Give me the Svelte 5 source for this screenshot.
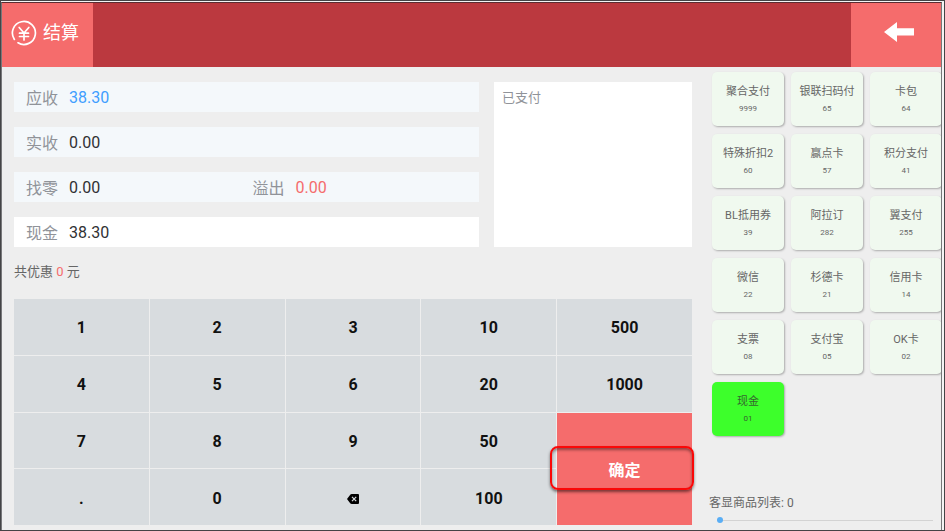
<script lang="ts">
  type Row = { id: string; label: string; value: string; tone?: string };

  const rows: Row[] = [
    { id: "due", label: "应收", value: "38.30", tone: "blue" },
    { id: "received", label: "实收", value: "0.00" },
    { id: "change", label: "找零", value: "0.00" },
  ];

  const keys = [
    "1", "2", "3", "10", "500",
    "4", "5", "6", "20", "1000",
    "7", "8", "9", "50", "ok",
    ".", "0", "del", "100",
  ];

  const methods = [
    { name: "聚合支付", code: "9999" },
    { name: "银联扫码付", code: "65" },
    { name: "卡包", code: "64" },
    { name: "特殊折扣2", code: "60" },
    { name: "赢点卡", code: "57" },
    { name: "积分支付", code: "41" },
    { name: "BL抵用券", code: "39" },
    { name: "阿拉订", code: "282" },
    { name: "翼支付", code: "255" },
    { name: "微信", code: "22" },
    { name: "杉德卡", code: "21" },
    { name: "信用卡", code: "14" },
    { name: "支票", code: "08" },
    { name: "支付宝", code: "05" },
    { name: "OK卡", code: "02" },
    { name: "现金", code: "01" },
  ];

  let selected = $state("01");
  let amount = $state("38.30");
  let listCount = $state(0);

  function press(key: string) {
    if (key === "ok") return;
    amount = key === "del" ? amount.slice(0, -1) : amount + key;
  }
</script>

<div class="frame">
  <div class="window">
    <header>
      <h1>
        <svg class="yen" viewBox="0 0 26 26" aria-hidden="true">
          <path d="M3.4 19.4A11.5 11.5 0 1 1 7 22.8" />
          <path d="M8.2 7.5 13 13l4.8-5.5M13 13v7M8.5 13.2h9M8.5 16.5h9" />
        </svg>
        结算
      </h1>
      <button class="back" aria-label="返回">
        <svg viewBox="0 0 30 20" aria-hidden="true">
          <path d="M0 10 13 0v6.3h17v7.2H13V20z" />
        </svg>
      </button>
    </header>

    <main>
      <section class="checkout">
        <div class="summary">
          <div class="rows">
            {#each rows as row (row.id)}
              <div class="row">
                <span class="label">{row.label}</span>
                <span class="value {row.tone ?? ''}">{row.value}</span>
                {#if row.id === "change"}
                  <span class="label">溢出</span>
                  <span class="value red">0.00</span>
                {/if}
              </div>
            {/each}
            <div class="row entry">
              <label class="label" for="cash">现金</label>
              <input id="cash" class="value" type="text" bind:value={amount} />
            </div>
          </div>
          <div class="paid">已支付</div>
        </div>

        <p class="discount">共优惠 <span class="red">0</span> 元</p>

        <div class="keypad">
          {#each keys as key (key)}
            <button
              class:ok={key === "ok"}
              aria-label={key === "del" ? "退格" : undefined}
              onclick={() => press(key)}
            >
              {#if key === "ok"}
                确定
                <span class="marker"></span>
              {:else if key === "del"}
                <svg class="del" viewBox="0 0 12 10" aria-hidden="true">
                  <path d="M0 5 3.2.8Q3.8 0 4.8 0H11q1 0 1 1v8q0 1-1 1H4.8q-1 0-1.6-.8z" />
                  <path class="cross" d="m5 2.8 4.2 4.4M9.2 2.8 5 7.2" />
                </svg>
              {:else}
                {key}
              {/if}
            </button>
          {/each}
        </div>
      </section>

      <aside>
        <div class="methods">
          {#each methods as method (method.code)}
            <button
              class:selected={selected === method.code}
              onclick={() => (selected = method.code)}
            >
              <span>{method.name}</span>
              <small>{method.code}</small>
            </button>
          {/each}
        </div>
        <div class="goods">
          <label for="goods">客显商品列表: {listCount}</label>
          <input id="goods" type="range" min="0" max="10" bind:value={listCount} />
        </div>
      </aside>
    </main>
  </div>
</div>

<style>
  :global(body) {
    margin: 0;
    background: #fff;
  }

  .frame {
    box-sizing: border-box;
    height: 100vh;
    padding: 1px 2px 0 0;
    border: 1px solid #444446;
    background: #f4f4f4;
  }
  .window {
    display: flex;
    flex-direction: column;
    box-sizing: border-box;
    height: 100%;
    border: solid #77777a;
    border-width: 0 1px;
    border-top: 1px solid #5a2c30;
    background: #eee;
    color: #666;
    font-family: Roboto, "Noto Sans CJK SC", sans-serif;
    overflow: hidden;
  }

  button {
    margin: 0;
    padding: 0;
    border: none;
    font-family: inherit;
    cursor: pointer;
  }

  header {
    display: flex;
    justify-content: space-between;
    flex: none;
    height: 64px;
    background: #bb393f;
  }
  h1 {
    display: flex;
    align-items: center;
    gap: 6px;
    box-sizing: border-box;
    width: 91px;
    margin: 0;
    padding: 0 0 4px 9px;
    background: #f56c6c;
    color: #fff;
    font-size: 18px;
    font-weight: 400;
    line-height: 24px;
    white-space: nowrap;
  }
  .yen {
    flex: none;
    width: 26px;
    height: 26px;
    fill: none;
    stroke: #fff;
    stroke-width: 1.7;
    stroke-linecap: round;
  }
  .back {
    display: flex;
    align-items: center;
    justify-content: center;
    width: 90px;
    padding: 0 0 7px 5px;
    background: #f56c6c;
  }
  .back svg {
    width: 30px;
    height: 20px;
    fill: #fff;
  }

  main {
    display: flex;
    flex: 1;
    min-height: 0;
  }
  .checkout {
    display: flex;
    flex-direction: column;
    flex: 1;
    padding: 15px 17px 5px 12px;
  }
  .summary {
    display: flex;
    gap: 15px;
  }
  .rows {
    display: flex;
    flex-direction: column;
    gap: 15px;
    flex: 1;
  }
  .row {
    display: flex;
    align-items: center;
    height: 30px;
    padding-left: 12px;
    background: #f4f8fb;
    font-size: 16px;
  }
  .entry {
    background: #fff;
  }
  .label {
    width: 43px;
    color: #909399;
  }
  .value {
    flex: 1;
    color: #303133;
  }
  .entry input {
    min-width: 0;
    padding: 0;
    border: none;
    outline: none;
    background: none;
    font: inherit;
  }
  .value.blue {
    color: #409eff;
  }
  .red,
  .value.red {
    color: #f56c6c;
  }
  .paid {
    box-sizing: border-box;
    width: 198px;
    padding: 7px 8px;
    background: #fff;
    color: #909399;
    font-size: 13px;
    line-height: 18px;
  }
  .discount {
    margin: 15px 0 17px;
    font-size: 13px;
    line-height: 20px;
  }

  .keypad {
    display: grid;
    grid-template-columns: repeat(5, 1fr);
    grid-template-rows: repeat(4, 1fr);
    gap: 1px;
    flex: 1;
  }
  .keypad button {
    padding-top: 2px;
    background: #d8dcdf;
    color: #111;
    font-size: 16px;
    font-weight: 700;
  }
  .keypad .ok {
    position: relative;
    grid-area: 3 / 5 / 5 / 6;
    padding-top: 0;
    background: #f56c6c;
    color: #fff;
  }
  .marker {
    position: absolute;
    inset: 33px -2px 35px -7px;
    border: 2px solid #fa0808;
    border-radius: 8px;
    box-shadow: 0 2px 3px rgb(0 0 0 / 50%), inset 0 2px 3px rgb(0 0 0 / 40%);
    pointer-events: none;
  }
  .del {
    width: 12px;
    height: 10px;
    fill: #000;
  }
  .cross {
    stroke: #d8dcdf;
    stroke-width: 1.2;
  }

  aside {
    display: flex;
    flex-direction: column;
    justify-content: space-between;
    box-sizing: border-box;
    width: 232px;
    padding: 5px 0 7px;
  }
  .methods {
    display: grid;
    grid-template-columns: repeat(3, 72px);
    grid-auto-rows: 54px;
    gap: 8px 7px;
    padding-left: 3px;
  }
  .methods button {
    display: flex;
    flex-direction: column;
    align-items: center;
    justify-content: center;
    gap: 3px;
    border-radius: 5px;
    background: #f0f9ef;
    box-shadow: 1px 1px 2px rgb(0 0 0 / 28%);
    color: #666;
    font-size: 11px;
    line-height: 16px;
    white-space: nowrap;
  }
  .methods small {
    font-size: 8px;
    line-height: 12px;
  }
  .methods .selected {
    background: #3dff2b;
    color: #35652f;
  }

  .goods {
    display: flex;
    flex-direction: column;
    font-size: 12px;
    line-height: 18px;
  }
  .goods input {
    appearance: none;
    height: 6px;
    margin: 5px 8px 0;
    background: linear-gradient(#d3d3d3, #d3d3d3) center / 100% 1px no-repeat;
  }
  .goods input::-webkit-slider-thumb {
    appearance: none;
    width: 6px;
    height: 6px;
    border-radius: 50%;
    background: #5aaef5;
  }
</style>
